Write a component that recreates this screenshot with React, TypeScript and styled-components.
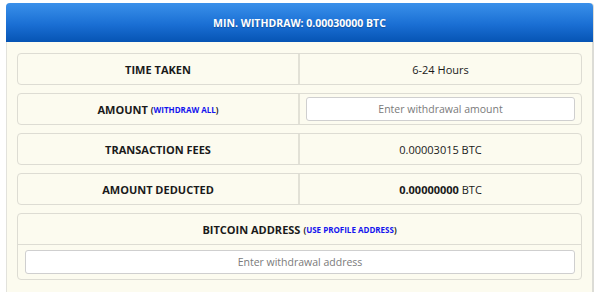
import React from 'react';
import styled, { createGlobalStyle } from 'styled-components';

const GlobalStyle = createGlobalStyle`
  html, body {
    margin: 0;
    padding: 0;
    background: #ffffff;
    font-family: 'Open Sans', 'Liberation Sans', sans-serif;
  }
`;

const Panel = styled.div`
  margin: 3px 6px 0 6px;
  width: 588px;
  height: 289px;
  box-sizing: border-box;
  background: #fcfbef;
  border-left: 1px solid #e2e2dc;
  border-right: 2px solid #dcdcd6;
  border-radius: 4px 4px 0 0;
  display: flex;
  flex-direction: column;
`;

const Header = styled.div`
  height: 39px;
  display: flex;
  align-items: center;
  justify-content: center;
  background: linear-gradient(to bottom, #3a90ea 0%, #1a6fd4 55%, #0654b4 100%);
  border-radius: 4px 4px 0 0;
  color: #ffffff;
  font-weight: 700;
  font-size: 10.5px;
  text-shadow: 0 1px 1px rgba(0, 0, 0, 0.25);
  margin: 0 -1px 0 -1px;
`;

const Body = styled.div`
  padding: 11px 10px 0 10px;
  display: flex;
  flex-direction: column;
  gap: 8px;
`;

const Row = styled.div`
  display: grid;
  grid-template-columns: 282px 1fr;
  height: 32px;
  box-sizing: border-box;
  border: 1px solid #dddcd3;
  border-radius: 4px;
`;

const Cell = styled.div<{ $label?: boolean }>`
  display: flex;
  align-items: center;
  justify-content: center;
  font-size: 11px;
  font-weight: ${p => (p.$label ? 700 : 400)};
  color: #1a1a1a;
  padding: 0 6px 0 6px;
  ${p => (p.$label ? 'border-right: 2px solid #e2e1d6;' : '')}
`;

const Link = styled.span`
  font-size: 8px;
  font-weight: 700;
  margin-left: 3px;
  color: #1a1a1a;

  a {
    color: #1414ee;
    text-decoration: none;
  }
`;

const Input = styled.input`
  width: 100%;
  height: 24px;
  box-sizing: border-box;
  border: 1px solid #cfcfcf;
  border-radius: 3px;
  background: #ffffff;
  font-family: 'Open Sans', 'Liberation Sans', sans-serif;
  font-size: 10.5px;
  text-align: center;
  outline: none;

  &::placeholder {
    color: #7a7a7a;
  }
`;

const Block = styled.div`
  border: 1px solid #dddcd3;
  border-radius: 4px;
  display: flex;
  flex-direction: column;
`;

const BlockTitle = styled.div`
  height: 30px;
  display: flex;
  align-items: center;
  justify-content: center;
  font-size: 11px;
  font-weight: 700;
  color: #1a1a1a;
  border-bottom: 1px solid #dddcd3;
`;

const BlockField = styled.div`
  padding: 4px 6px 5px 7px;
`;

export default function App() {
  return (
    <>
      <GlobalStyle />
      <Panel>
        <Header>MIN. WITHDRAW: 0.00030000 BTC</Header>
        <Body>
          <Row>
            <Cell $label>TIME TAKEN</Cell>
            <Cell>6-24 Hours</Cell>
          </Row>
          <Row>
            <Cell $label>
              AMOUNT
              <Link>
                (<a href="#">WITHDRAW ALL</a>)
              </Link>
            </Cell>
            <Cell>
              <Input placeholder="Enter withdrawal amount" />
            </Cell>
          </Row>
          <Row>
            <Cell $label>TRANSACTION FEES</Cell>
            <Cell>0.00003015 BTC</Cell>
          </Row>
          <Row>
            <Cell $label>AMOUNT DEDUCTED</Cell>
            <Cell>
              <b>0.00000000</b>&nbsp;BTC
            </Cell>
          </Row>
          <Block>
            <BlockTitle>
              BITCOIN ADDRESS
              <Link>
                (<a href="#">USE PROFILE ADDRESS</a>)
              </Link>
            </BlockTitle>
            <BlockField>
              <Input placeholder="Enter withdrawal address" />
            </BlockField>
          </Block>
        </Body>
      </Panel>
    </>
  );
}
